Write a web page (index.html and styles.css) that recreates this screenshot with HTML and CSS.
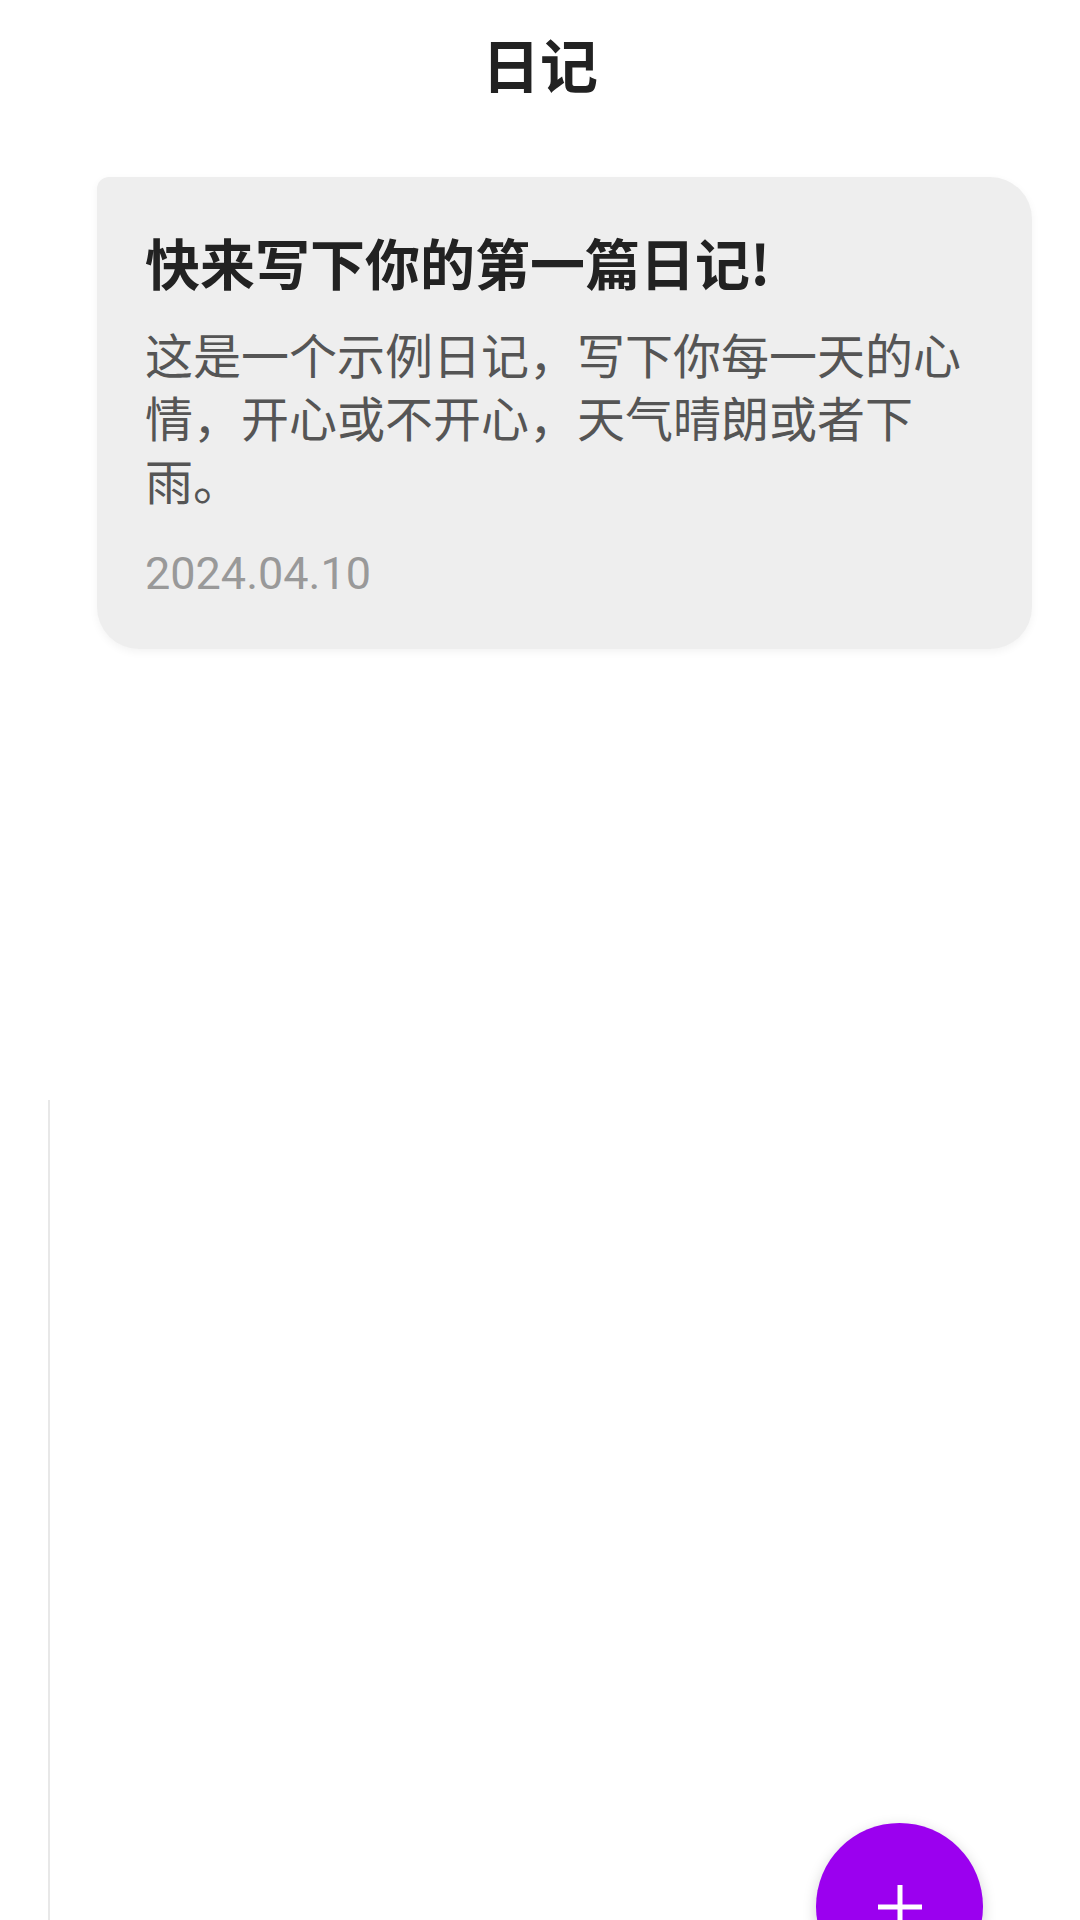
FILE: index.html
```html
<!DOCTYPE html>
<html lang="zh-CN">
<head>
  <meta charset="utf-8">
  <title>日记</title>
  <meta name="viewport" content="width=device-width, initial-scale=1.0">
  <link rel="stylesheet" href="styles.css">
</head>
<body>
  <!-- top title -->
  <header class="topbar">
    <h1 class="topbar-title">日记</h1>
  </header>

  <!-- diary list -->
  <main class="diary-list">
    <article class="diary-card">
      <h2 class="diary-title">快来写下你的第一篇日记!</h2>
      <p class="diary-text">这是一个示例日记，写下你每一天的心情，开心或不开心，天气晴朗或者下雨。</p>
      <time class="diary-date">2024.04.10</time>
    </article>
  </main>

  <!-- faint rail along the left edge -->
  <div class="rail"></div>

  <!-- add button -->
  <button class="fab" aria-label="写日记">
    <svg viewBox="0 0 44 44" width="44" height="44">
      <line x1="22" y1="0" x2="22" y2="44" stroke="#fff" stroke-width="5"/>
      <line x1="0" y1="22" x2="44" y2="22" stroke="#fff" stroke-width="5"/>
    </svg>
  </button>
</body>
</html>
```

FILE: styles.css
```css
/* reset */
* {
  margin: 0;
  padding: 0;
  box-sizing: border-box;
}
body {
  background: #fff;
  font-family: "Noto Sans CJK SC", "Noto Sans", sans-serif;
  min-height: 1920px;
  display: flex;
  flex-direction: column;
  overflow: hidden;
}
/* header */
.topbar {
  padding-top: 28px;
  text-align: center;
}
.topbar-title {
  font-size: 58px;
  line-height: 70px;
  font-weight: 700;
  color: #222;
}
/* list + card */
.diary-list {
  padding: 79px 48px 0 97px;
}
.diary-card {
  background: #eeeeee;
  border-radius: 12px 42px 42px 42px;
  padding: 51px 48px 48px 48px;
  box-shadow: 0 3px 8px rgba(0, 0, 0, 0.05);
}
.diary-title {
  font-size: 55px;
  line-height: 66px;
  font-weight: 700;
  color: #222;
}
.diary-text {
  margin-top: 28px;
  font-size: 48px;
  line-height: 63px;
  color: #555;
}
.diary-date {
  display: block;
  margin-top: 35px;
  font-family: Roboto, "Noto Sans", sans-serif;
  font-size: 45px;
  line-height: 55px;
  color: #999;
}
/* left rail */
.rail {
  flex: 1;
  margin-top: 451px;
  margin-left: 48px;
  border-left: 2px solid #e8e8e8;
}
/* floating add button */
.fab {
  position: fixed;
  right: 97px;
  bottom: -70px;
  width: 167px;
  height: 167px;
  border: none;
  border-radius: 50%;
  background: #9b00ef;
  box-shadow: 0 4px 14px rgba(0, 0, 0, 0.18);
  display: flex;
  align-items: center;
  justify-content: center;
}
```
